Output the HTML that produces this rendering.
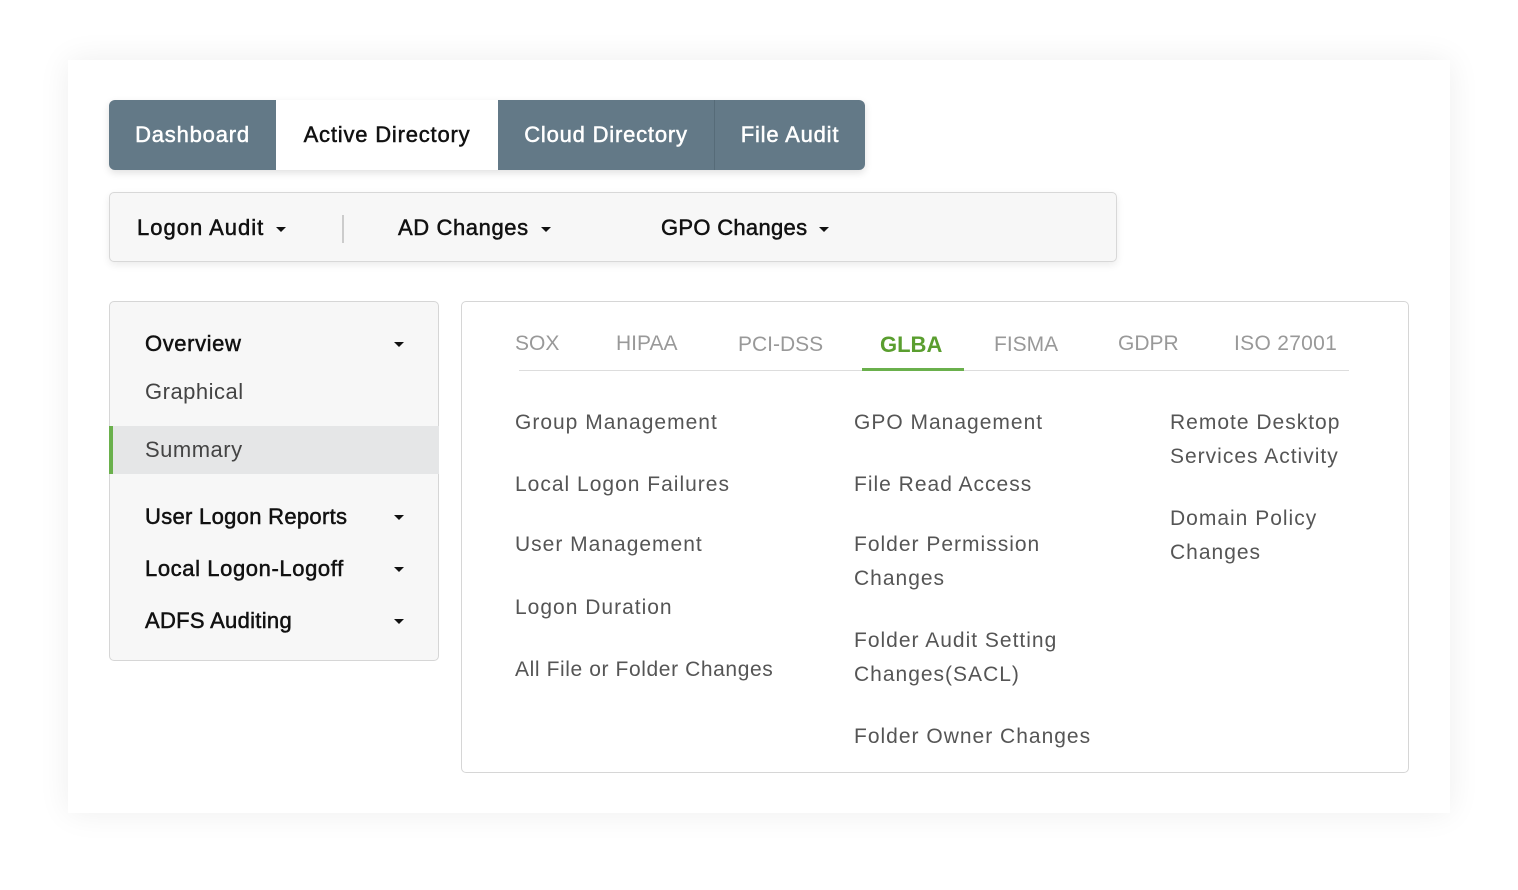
<!DOCTYPE html>
<html><head><style>
*{margin:0;padding:0;box-sizing:border-box}
body{width:1518px;height:890px;background:#fff;font-family:"Liberation Sans",sans-serif;position:relative;overflow:hidden}
.card{position:absolute;left:68px;top:60px;width:1382px;height:753px;background:#fff;box-shadow:0 0 30px rgba(0,0,0,.07)}
.a{position:absolute}
.tabs{left:109px;top:100px;width:756px;height:70px;border-radius:6px;overflow:hidden;box-shadow:0 3px 8px rgba(0,0,0,.12);display:flex;background:#637987}
.tabs div{height:70px;line-height:70px;font-size:22px;color:#fff;text-align:center;letter-spacing:.8px;-webkit-text-stroke:.5px currentColor}
.sub{left:109px;top:192px;width:1008px;height:70px;background:#f7f7f7;border:1px solid #d8d8d8;border-radius:5px;box-shadow:0 3px 8px rgba(0,0,0,.08)}
.t{position:absolute;font-size:22px;color:#111;white-space:nowrap}
.m{letter-spacing:.6px;-webkit-text-stroke:.5px currentColor}
.car{display:inline-block;width:0;height:0;border-left:5px solid transparent;border-right:5px solid transparent;border-top:5px solid #111;vertical-align:middle;margin-left:12px;-webkit-text-stroke:0}
.side{left:109px;top:301px;width:330px;height:360px;background:#f7f7f7;border:1px solid #d6d6d6;border-radius:5px}
.panel{left:461px;top:301px;width:948px;height:472px;background:#fff;border:1px solid #d6d6d6;border-radius:5px}
.g{color:#999;font-size:21px}
.l{color:#555;font-size:21px;line-height:34px;white-space:normal;letter-spacing:1px}
.c{position:absolute;width:0;height:0;border-left:5px solid transparent;border-right:5px solid transparent;border-top:5px solid #111}
</style></head><body>
<div class="card"></div>
<div class="a tabs">
<div style="width:167px">Dashboard</div>
<div style="width:222px;background:#fff;color:#111">Active Directory</div>
<div style="width:217px;border-right:1px solid #566b78">Cloud Directory</div>
<div style="width:150px">File Audit</div>
</div>
<div class="a sub">
<div class="t m" style="left:27px;top:22px;letter-spacing:1px">Logon Audit<span class="car"></span></div>
<div class="a" style="left:232px;top:22px;width:2px;height:28px;background:#ccc"></div>
<div class="t m" style="left:288px;top:22px;letter-spacing:.6px">AD Changes<span class="car"></span></div>
<div class="t m" style="left:551px;top:22px;letter-spacing:.3px">GPO Changes<span class="car"></span></div>
</div>
<div class="a side">
<div class="t m" style="left:35px;top:29px">Overview</div><div class="c" style="left:284px;top:40px"></div>
<div class="t" style="left:35px;top:77px;color:#444;letter-spacing:.5px">Graphical</div>
<div class="a" style="left:-1px;top:124px;width:330px;height:48px;background:#e5e6e7;border-left:4px solid #6ab04c"></div>
<div class="t" style="left:35px;top:135px;color:#444;letter-spacing:.5px">Summary</div>
<div class="t m" style="left:35px;top:202px;letter-spacing:.3px">User Logon Reports</div><div class="c" style="left:284px;top:213px"></div>
<div class="t m" style="left:35px;top:254px;letter-spacing:.6px">Local Logon-Logoff</div><div class="c" style="left:284px;top:265px"></div>
<div class="t m" style="left:35px;top:306px;letter-spacing:.3px">ADFS Auditing</div><div class="c" style="left:284px;top:317px"></div>
</div>
<div class="a panel">
<div class="t g" style="left:53px;top:30px">SOX</div>
<div class="t g" style="left:154px;top:30px">HIPAA</div>
<div class="t g" style="left:276px;top:31px">PCI-DSS</div>
<div class="t" style="left:418px;top:30px;color:#5a9e2f;font-weight:bold">GLBA</div>
<div class="t g" style="left:532px;top:31px">FISMA</div>
<div class="t g" style="left:656px;top:30px">GDPR</div>
<div class="t g" style="left:772px;top:30px;letter-spacing:.3px">ISO 27001</div>
<div class="a" style="left:57px;top:68px;width:830px;height:1px;background:#ddd"></div>
<div class="a" style="left:400px;top:66px;width:102px;height:3px;background:#6ab04c"></div>
<div class="t l" style="left:53px;top:104px">Group Management</div>
<div class="t l" style="left:53px;top:166px">Local Logon Failures</div>
<div class="t l" style="left:53px;top:226px">User Management</div>
<div class="t l" style="left:53px;top:289px">Logon Duration</div>
<div class="t l" style="left:53px;top:351px;letter-spacing:.6px">All File or Folder Changes</div>
<div class="t l" style="left:392px;top:104px">GPO Management</div>
<div class="t l" style="left:392px;top:166px">File Read Access</div>
<div class="t l" style="left:392px;top:226px;width:220px">Folder Permission Changes</div>
<div class="t l" style="left:392px;top:322px;width:230px">Folder Audit Setting Changes(SACL)</div>
<div class="t l" style="left:392px;top:418px">Folder Owner Changes</div>
<div class="t l" style="left:708px;top:104px;width:200px">Remote Desktop Services Activity</div>
<div class="t l" style="left:708px;top:200px;width:170px">Domain Policy Changes</div>
</div>
</body></html>
